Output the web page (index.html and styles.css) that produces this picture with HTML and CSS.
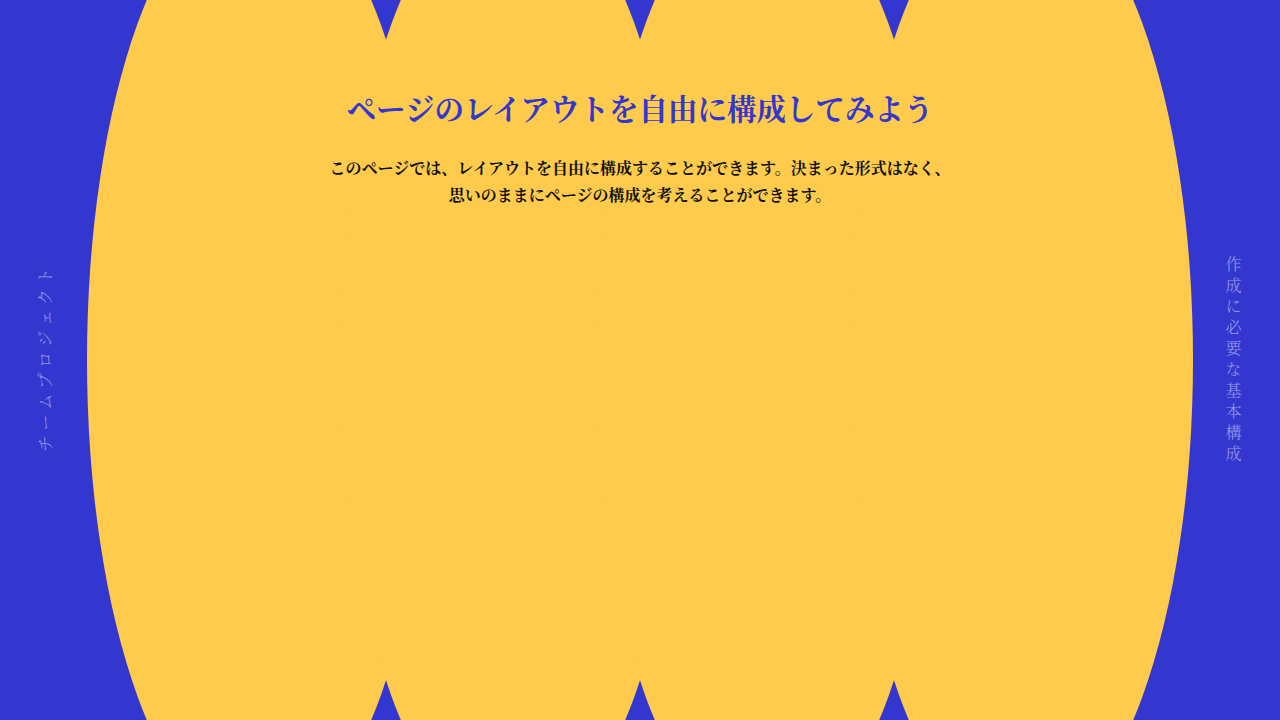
FILE: index.html
```html
<!DOCTYPE html>
<html lang="ja">
<head>
<meta charset="utf-8">
<title>ページのレイアウトを自由に構成してみよう</title>
<link rel="stylesheet" href="styles.css">
</head>
<body>
<div class="stage">
  <div class="backdrop" aria-hidden="true">
    <div class="blob"></div>
    <div class="blob"></div>
    <div class="blob"></div>
    <div class="blob"></div>
  </div>
  <div class="layout">
    <aside class="side side-left"><span class="label label-left">チームプロジェクト</span></aside>
    <main class="content">
      <h1 class="title">ページのレイアウトを自由に構成してみよう</h1>
      <p class="lead">このページでは、レイアウトを自由に構成することができます。決まった形式はなく、<br>思いのままにページの構成を考えることができます。</p>
    </main>
    <aside class="side side-right"><span class="label label-right">作成に必要な基本構成</span></aside>
  </div>
</div>
</body>
</html>
```

FILE: styles.css
```css
html, body {
  margin: 0;
  padding: 0;
}

body {
  background: #3337cf;
  font-family: "Noto Serif CJK JP", "Noto Sans CJK JP", serif;
  overflow: hidden;
}

.stage {
  position: relative;
  width: 1280px;
  height: 720px;
  overflow: hidden;
}

.backdrop {
  position: absolute;
  inset: 0;
  display: flex;
  justify-content: center;
  align-items: center;
}

.blob {
  flex: 0 0 344px;
  height: 950px;
  border-radius: 50%;
  background: #fecb4c;
}

.blob + .blob {
  margin-left: -90px;
}

.layout {
  position: relative;
  height: 100%;
  display: grid;
  grid-template-columns: 90px 1fr 90px;
}

.side {
  display: flex;
  align-items: center;
  justify-content: center;
}

.label {
  font-size: 16px;
  letter-spacing: 5px;
  color: rgba(255, 255, 255, 0.5);
  font-weight: 300;
  line-height: 1;
}

.label-left {
  writing-mode: vertical-rl;
  text-orientation: sideways;
  transform: rotate(180deg);
  margin-top: -6px;
}

.label-right {
  writing-mode: vertical-rl;
  margin-left: -4px;
  margin-top: 2px;
}

.content {
  display: flex;
  flex-direction: column;
  align-items: center;
  padding-top: 87px;
  text-align: center;
}

.title {
  margin: 0;
  font-size: 29.5px;
  line-height: 41px;
  font-weight: 700;
  color: #3337cf;
}

.lead {
  margin: 26px 0 0;
  font-size: 16px;
  line-height: 27px;
  font-weight: 700;
  color: #111111;
}
```
